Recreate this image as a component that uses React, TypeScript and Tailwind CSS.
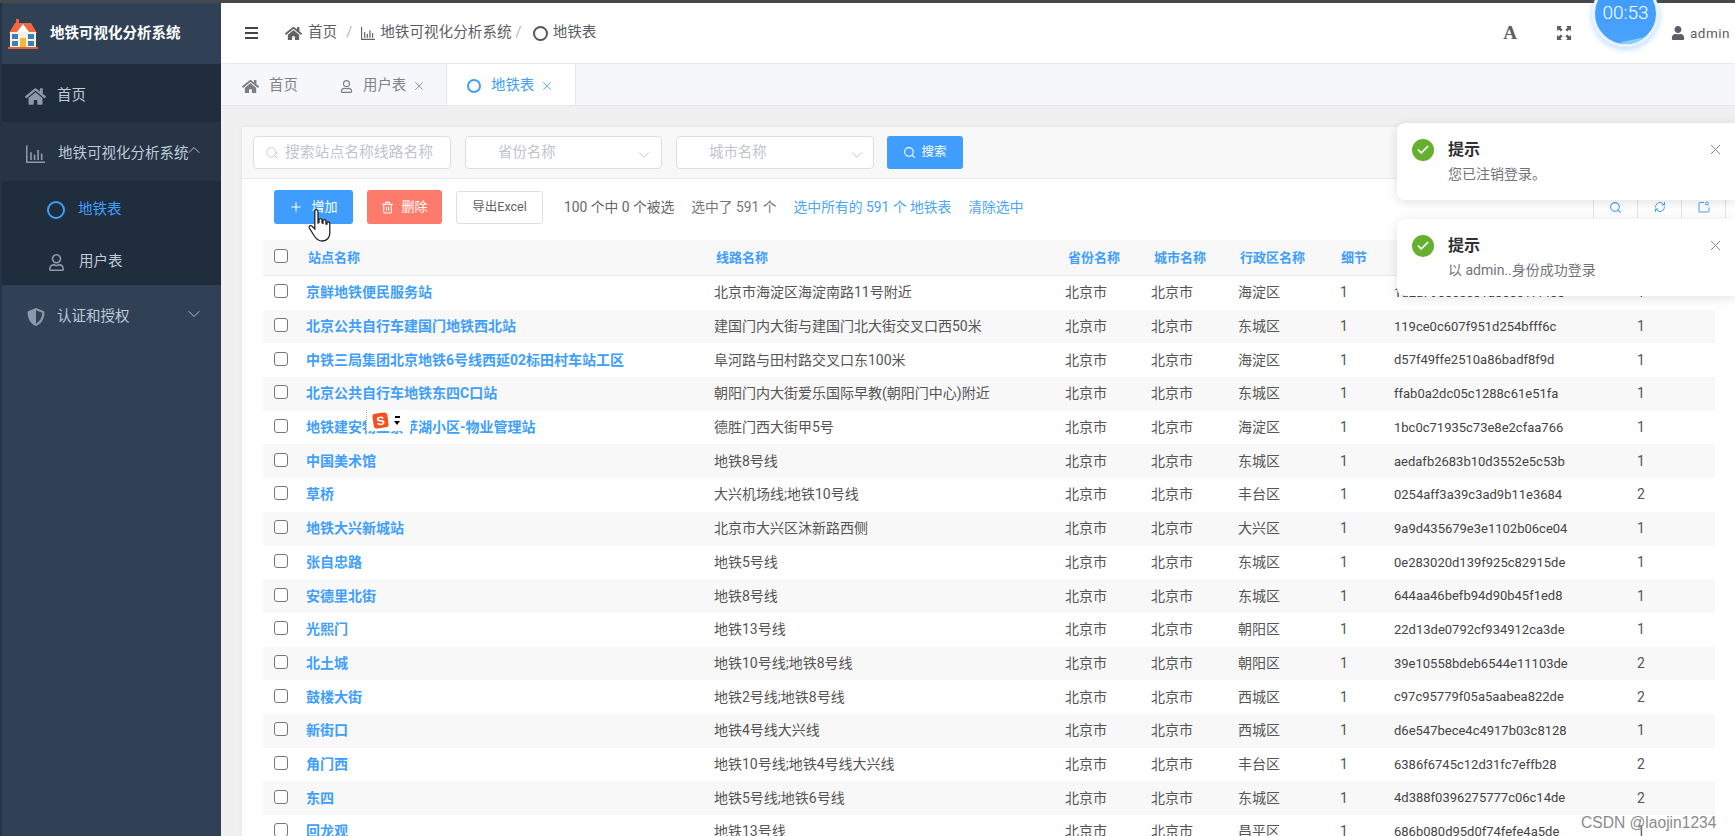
import { ChevronDown, ChevronUp, Search, Plus, Trash2, X, Check, RefreshCw } from "lucide-react";
import { FaHome, FaUser, FaRegUser, FaShieldAlt } from "react-icons/fa";

const CJK = "font-['Roboto','Noto_Sans_CJK_SC',sans-serif]";

const rows = [
  ["京鲜地铁便民服务站", "北京市海淀区海淀南路11号附近", "海淀区", "1", "1d2a7900c5e01a060c17f408", "1"],
  ["北京公共自行车建国门地铁西北站", "建国门内大街与建国门北大街交叉口西50米", "东城区", "1", "119ce0c607f951d254bfff6c", "1"],
  ["中铁三局集团北京地铁6号线西延02标田村车站工区", "阜河路与田村路交叉口东100米", "海淀区", "1", "d57f49ffe2510a86badf8f9d", "1"],
  ["北京公共自行车地铁东四C口站", "朝阳门内大街爱乐国际早教(朝阳门中心)附近", "东城区", "1", "ffab0a2dc05c1288c61e51fa", "1"],
  ["地铁建安物业紫苹湖小区-物业管理站", "德胜门西大街甲5号", "海淀区", "1", "1bc0c71935c73e8e2cfaa766", "1"],
  ["中国美术馆", "地铁8号线", "东城区", "1", "aedafb2683b10d3552e5c53b", "1"],
  ["草桥", "大兴机场线;地铁10号线", "丰台区", "1", "0254aff3a39c3ad9b11e3684", "2"],
  ["地铁大兴新城站", "北京市大兴区沐新路西侧", "大兴区", "1", "9a9d435679e3e1102b06ce04", "1"],
  ["张自忠路", "地铁5号线", "东城区", "1", "0e283020d139f925c82915de", "1"],
  ["安德里北街", "地铁8号线", "东城区", "1", "644aa46befb94d90b45f1ed8", "1"],
  ["光熙门", "地铁13号线", "朝阳区", "1", "22d13de0792cf934912ca3de", "1"],
  ["北土城", "地铁10号线;地铁8号线", "朝阳区", "1", "39e10558bdeb6544e11103de", "2"],
  ["鼓楼大街", "地铁2号线;地铁8号线", "西城区", "1", "c97c95779f05a5aabea822de", "2"],
  ["新街口", "地铁4号线大兴线", "西城区", "1", "d6e547bece4c4917b03c8128", "1"],
  ["角门西", "地铁10号线;地铁4号线大兴线", "丰台区", "1", "6386f6745c12d31fc7effb28", "2"],
  ["东四", "地铁5号线;地铁6号线", "东城区", "1", "4d388f0396275777c06c14de", "2"],
  ["回龙观", "地铁13号线", "昌平区", "1", "686b080d95d0f74fefe4a5de", "1"],
];

function Box() {
  return <span className="-mt-[3px] block h-[14px] w-[14px] rounded-[3px] border border-[#767676] bg-white" />;
}

function Ring({ className }: { className: string }) {
  return <span className={"inline-block rounded-full border-2 " + className} />;
}

function ChartIcon({ size, className }: { size: number; className: string }) {
  return (
    <svg width={size} height={size} viewBox="0 0 16 16" className={className} fill="currentColor">
      <path d="M0 1h1.300v13.700H16V16H0z" />
      <rect x="3.500" y="7" width="1.400" height="6.500" />
      <rect x="6.500" y="9" width="1.400" height="4.500" />
      <rect x="9.500" y="5" width="1.400" height="8.500" />
      <rect x="12.500" y="8" width="1.400" height="5.500" />
    </svg>
  );
}

function Toast({ body, className }: { body: string; className: string }) {
  return (
    <div className={"absolute left-[1397px] h-[77px] w-[338px] rounded-l-[8px] bg-white shadow-[0_2px_12px_rgba(0,0,0,0.12)] " + className}>
      <span className="absolute left-[15px] top-[16px] flex h-[22px] w-[22px] items-center justify-center rounded-full bg-[#67b02f]">
        <Check size={14} strokeWidth={3} className="text-white" />
      </span>
      <div className="absolute left-[51px] top-[15px] text-[16px] font-bold leading-[24px] text-[#303133]">提示</div>
      <div className="absolute left-[51px] top-[41px] text-[14px] leading-[21px] text-[#70747a]">{body}</div>
      <X size={17} strokeWidth={1.4} className="absolute left-[310px] top-[18px] text-[#80848c]" />
    </div>
  );
}

function Logo() {
  return (
    <svg width="30" height="30" viewBox="0 0 30 30">
      <rect x="8" y="0" width="3" height="6" fill="#e8613c" />
      <path d="M7 4h16l6 10H1z" fill="#f0683f" />
      <rect x="2" y="13" width="26" height="16" fill="#f4f1e6" />
      <path d="M15 5l6 8H9z" fill="#fff" />
      <rect x="4" y="15" width="6" height="5" fill="#3f7fb8" />
      <rect x="20" y="15" width="6" height="5" fill="#3f7fb8" />
      <rect x="4" y="22" width="6" height="5" fill="#3f7fb8" />
      <rect x="20" y="22" width="6" height="5" fill="#3f7fb8" />
      <rect x="12" y="19" width="6" height="10" fill="#f2b83a" />
      <rect x="0" y="28" width="30" height="2" fill="#e8613c" />
    </svg>
  );
}

export default function App() {
  return (
    <div className={"relative flex h-[836px] w-[1735px] flex-col overflow-hidden bg-white " + CJK}>
      <div className="h-[3px] shrink-0 bg-[#45484c]" />
      <div className="flex min-h-0 flex-1">
        {/* sidebar */}
        <aside className="flex w-[221px] shrink-0 flex-col border-l-2 border-[#263445] bg-[#304156] text-[14.5px] text-[#bfcbd9]">
          <div className="flex h-[61px] items-center gap-[12px] pl-[6px]">
            <Logo />
            <span className="font-bold text-white">地铁可视化分析系统</span>
          </div>
          <div className="flex h-[58px] items-center bg-[#1f2d3d] pl-[23px] pt-[6px]">
            <FaHome size={21} className="text-[#8d99a6]" />
            <span className="ml-[11px]">首页</span>
          </div>
          <div className="flex h-[59px] items-center bg-[#263445] pl-[24px] pt-[4px]">
            <ChartIcon size={19} className="text-[#8d99a6]" />
            <span className="ml-[13px]">地铁可视化分析系统</span>
            <ChevronUp size={20} strokeWidth={1.1} className="-ml-[5px] -mt-[8px]" />
          </div>
          <div className="flex h-[52px] items-center bg-[#1f2d3d] pl-[45px] pt-[6px] text-[#409eff]">
            <Ring className="h-[18px] w-[18px] border-[#409eff]" />
            <span className="ml-[13px]">地铁表</span>
          </div>
          <div className="flex h-[52px] items-center bg-[#1f2d3d] pl-[46px] pt-[6px]">
            <FaRegUser size={17} className="text-[#8d99a6]" />
            <span className="ml-[14px]">用户表</span>
          </div>
          <div className="flex h-[59px] items-center pl-[25px] pt-[4px]">
            <FaShieldAlt size={18} className="text-[#8d99a6]" />
            <span className="ml-[12px]">认证和授权</span>
            <ChevronDown size={20} strokeWidth={1.1} className="ml-[54px] -mt-[6px]" />
          </div>
        </aside>

        <main className="flex min-w-0 flex-1 flex-col">
          {/* breadcrumb */}
          <header className="flex h-[61px] shrink-0 items-center border-b border-[#e8eaee] pl-[24px] text-[14.6px] text-[#5a5e66]">
            <div className="flex w-[13px] flex-col gap-[3px]">
              <span className="h-[2px] bg-[#444]" />
              <span className="h-[2px] bg-[#444]" />
              <span className="h-[2px] bg-[#444]" />
            </div>
            <FaHome size={17} className="ml-[27px] text-[#606266]" />
            <span className="ml-[6px]">首页</span>
            <span className="mx-[9px] text-[#b4b7bd]">/</span>
            <ChartIcon size={14} className="text-[#606266]" />
            <span className="ml-[5px]">地铁可视化分析系统</span>
            <span className="ml-[4px] mr-[11px] text-[#b4b7bd]">/</span>
            <Ring className="h-[15px] w-[15px] border-[#555]" />
            <span className="ml-[5px]">地铁表</span>
            <div className="ml-auto flex items-center pr-[5px]">
              <span className="mr-[40px] font-['Liberation_Serif',serif] text-[19px] font-bold text-[#5a5e66]">A</span>
              <svg width="14" height="14" viewBox="0 0 14 14" className="mr-[100px] text-[#5a5e66]" fill="currentColor">
                <path d="M0 0h5L3.400 1.600 5.600 3.800 3.800 5.600 1.600 3.400 0 5zM14 0v5l-1.600-1.600-2.200 2.200-1.800-1.800 2.200-2.200L9 0zM0 14V9l1.600 1.600 2.200-2.200 1.800 1.800-2.200 2.200L5 14zM14 14H9l1.600-1.600-2.200-2.200 1.800-1.800 2.200 2.200L14 9z" />
              </svg>
              <FaUser size={14} className="mr-[5px] text-[#5a5e66]" />
              <span className="text-[13.5px] tracking-[0.5px]">admin</span>
            </div>
          </header>

          {/* tabs */}
          <div className="flex h-[42px] shrink-0 items-stretch border-b border-[#e4e7ed] bg-[#f5f7fa] text-[14.4px] text-[#7f8389]">
            <div className="flex w-[119px] items-center pl-[21px] pt-[3px]">
              <FaHome size={17} className="text-[#7a7f85]" />
              <span className="ml-[10px]">首页</span>
            </div>
            <div className="flex w-[106px] items-center pt-[3px]">
              <FaRegUser size={13} className="text-[#7a7f85]" />
              <span className="ml-[10px]">用户表</span>
              <X size={14} strokeWidth={1.4} className="ml-[6px]" />
            </div>
            <div className="flex w-[130px] items-center border-x border-[#e4e7ed] bg-white pl-[20px] pt-[3px] text-[#409eff]">
              <Ring className="h-[14px] w-[14px] border-[#409eff]" />
              <span className="ml-[10px]">地铁表</span>
              <X size={14} strokeWidth={1.4} className="ml-[6px]" />
            </div>
          </div>

          {/* content */}
          <div className="min-h-0 flex-1 bg-[#f0f0f0] pl-[21px] pt-[21px]">
            <div className="h-full bg-white shadow-[0_0_6px_rgba(0,0,0,0.05)]">
              <div className="flex h-[52px] items-center gap-[14px] border-b border-[#ebebeb] bg-[#f8f8f8] pl-[11px]">
                <div className="flex h-[33px] w-[198px] items-center rounded-[4px] border border-[#dcdfe6] bg-white pl-[11px] text-[14.8px] text-[#c0c4cc]">
                  <Search size={14} strokeWidth={1.5} />
                  <span className="ml-[6px]">搜索站点名称线路名称</span>
                </div>
                <div className="flex h-[33px] w-[197px] items-center rounded-[4px] border border-[#dcdfe6] bg-white pl-[32px] text-[14.4px] text-[#c0c4cc]">
                  <span>省份名称</span>
                  <ChevronDown size={18} strokeWidth={1.3} className="ml-[79px] mt-[4px]" />
                </div>
                <div className="flex h-[33px] w-[198px] items-center rounded-[4px] border border-[#dcdfe6] bg-white pl-[32px] text-[14.4px] text-[#c0c4cc]">
                  <span>城市名称</span>
                  <ChevronDown size={18} strokeWidth={1.3} className="ml-[81px] mt-[4px]" />
                </div>
                <div className="-ml-[1px] flex h-[33px] w-[76px] items-center justify-center gap-[5px] rounded-[3px] bg-[#409eff] text-[12.5px] text-white">
                  <Search size={13} />
                  搜索
                </div>
              </div>

              <div className="flex h-[61px] items-start pl-[32px] pt-[11px]">
                <div className="flex h-[34px] w-[79px] items-center justify-center gap-[8px] rounded-[3px] bg-[#3f9dfd] text-[13px] text-white">
                  <Plus size={14} />
                  增加
                </div>
                <div className="ml-[14px] flex h-[34px] w-[75px] items-center justify-center gap-[7px] rounded-[3px] bg-[#fe7b6c] text-[13px] text-white">
                  <Trash2 size={13} />
                  删除
                </div>
                <div className="ml-[14px] mt-[1px] flex h-[33px] w-[87px] items-center justify-center rounded-[3px] border border-[#dcdfe6] bg-white text-[12.5px] text-[#606266]">
                  导出Excel
                </div>
                <div className="ml-[21px] flex h-[34px] items-center gap-[17px] text-[13.8px]">
                  <span className="text-[#666]">100 个中 0 个被选</span>
                  <span className="text-[#777]">选中了 591 个</span>
                  <span className="text-[#4ba5f5]">选中所有的 591 个 地铁表</span>
                  <span className="text-[#4ba5f5]">清除选中</span>
                </div>
                <div className="ml-auto mt-[6px] flex h-[22px] text-[#409eff]">
                  <span className="flex w-[44px] items-center justify-center border-l border-[#e3e3e3]"><Search size={13} /></span>
                  <span className="flex w-[44px] items-center justify-center border-l border-[#e3e3e3]"><RefreshCw size={12} /></span>
                  <span className="flex w-[44px] items-center justify-center border-l border-[#e3e3e3]">
                    <svg width="12" height="12" viewBox="0 0 12 12" fill="none" stroke="currentColor">
                      <path d="M6 1.500H2a1 1 0 0 0-1 1V11h9a1 1 0 0 0 1-1V6.500" />
                      <circle cx="9" cy="2.500" r="1.500" />
                    </svg>
                  </span>
                  <span className="w-[10px] border-l border-[#e3e3e3]" />
                </div>
              </div>

              {/* table */}
              <div className="ml-[21px] mr-[20px]">
                <div className="flex h-[36px] items-center border-b border-[#e8e8e8] bg-[#f8f8f8] text-[13px] font-bold text-[#409eff]">
                  <span className="w-[11px]" />
                  <Box />
                  <span className="ml-[20px] w-[408px]">站点名称</span>
                  <span className="w-[352px]">线路名称</span>
                  <span className="w-[86px]">省份名称</span>
                  <span className="w-[86px]">城市名称</span>
                  <span className="w-[101px]">行政区名称</span>
                  <span className="w-[54px]">细节</span>
                </div>
                {rows.map((r, i) => (
                  <div key={i} className={"flex h-[33.7px] items-center text-[14px] text-[#555] " + (i % 2 === 1 ? "bg-[#f8f8f8]" : "bg-white")}>
                    <span className="w-[11px]" />
                    <Box />
                    <a className="ml-[18px] w-[408px] font-bold text-[#409eff]">{r[0]}</a>
                    <span className="w-[351px]">{r[1]}</span>
                    <span className="w-[86px]">北京市</span>
                    <span className="w-[87px]">北京市</span>
                    <span className="w-[102px]">{r[2]}</span>
                    <span className="w-[54px]">{r[3]}</span>
                    <span className="w-[243px] text-[13px] text-[#444]">{r[4]}</span>
                    <span>{r[5]}</span>
                  </div>
                ))}
              </div>
            </div>
          </div>
        </main>
      </div>

      {/* overlays */}
      <div className="absolute left-[1592px] top-[-20px] flex h-[67px] w-[67px] items-center justify-center overflow-hidden rounded-full border-[3px] border-[#e6f2fd] bg-gradient-to-b from-[#3d9bff] to-[#4aa3fb] text-[19px] font-light text-white shadow-[0_2px_6px_rgba(64,158,255,0.4)]">
        00:53
        <span className="absolute bottom-[-7px] left-[22px] h-[12px] w-[40px] rotate-[-12deg] rounded-full bg-[#8ccdfa]" />
      </div>
      <Toast className="top-[123px]" body="您已注销登录。" />
      <Toast className="top-[219px]" body="以 admin..身份成功登录" />

      {/* cursor */}
      <svg className="absolute left-[307px] top-[208px]" width="26" height="36" viewBox="0 0 26 36">
        <path d="M8 2c1.500-1 3 0 3 1.500V15l1-.5V11c1.500-1 3 0 3 1v3l1 .2V12c1.500-.8 3 0 3 1v3h1v-2c1.500-.6 2.800.4 2.800 1.500V25c0 4-2.500 8-7.500 8-4 0-6-2-8-5l-5-8c-.8-1.500 1-3 2.500-2l3 3V3.500z" fill="#fff" stroke="#222" strokeWidth="1.300" />
      </svg>

      {/* IME bar */}
      <div className="absolute left-[366px] top-[410px] flex h-[21px] w-[45px] items-center border-l border-dotted border-[#aaa] bg-white pl-[6px]">
        <span className="flex h-[15px] w-[15px] rotate-[-8deg] items-center justify-center rounded-[3px] bg-[#f4511e] font-['Liberation_Sans',sans-serif] text-[12px] font-bold leading-none text-white">S</span>
        <span className="ml-[6px] flex flex-col items-center gap-[3px]">
          <span className="h-[2px] w-[5px] bg-black" />
          <span className="h-0 w-0 border-x-[3px] border-t-[4px] border-x-transparent border-t-black" />
        </span>
      </div>

      {/* watermark */}
      <div className="absolute left-[1581px] top-[811px] font-['Liberation_Sans',sans-serif] text-[15.6px] text-[#8a8a8a]">CSDN @laojin1234</div>
    </div>
  );
}
